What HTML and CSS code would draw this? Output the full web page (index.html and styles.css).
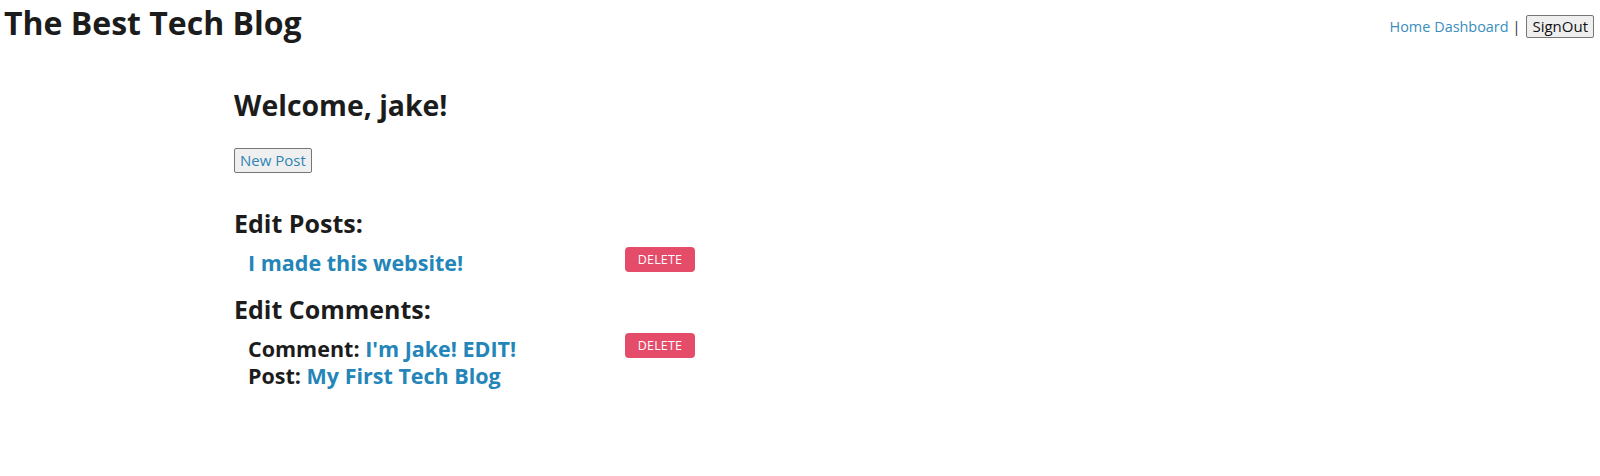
FILE: index.html
```html
<!DOCTYPE html>
<html lang="en">
<head>
<meta charset="utf-8">
<title>The Best Tech Blog</title>
<link rel="stylesheet" href="styles.css">
</head>
<body>
<header class="site-header">
  <h1 class="site-title">The Best Tech Blog</h1>
  <nav class="site-nav">
    <a href="#" class="nav-link">Home</a>
    <a href="#" class="nav-link">Dashboard</a>
    <span class="nav-sep">|</span>
    <button class="signout-btn">SignOut</button>
  </nav>
</header>
<main class="dashboard">
  <h2 class="welcome">Welcome, jake!</h2>
  <button class="new-post-btn">New Post</button>

  <h3 class="section-title">Edit Posts:</h3>
  <div class="item-row">
    <div class="item-text"><a href="#" class="item-link">I made this website!</a></div>
    <button class="delete-btn">DELETE</button>
  </div>

  <h3 class="section-title">Edit Comments:</h3>
  <div class="item-row">
    <div class="item-text">
      <div>Comment: <a href="#" class="item-link">I'm Jake! EDIT!</a></div>
      <div>Post: <a href="#" class="item-link">My First Tech Blog</a></div>
    </div>
    <button class="delete-btn">DELETE</button>
  </div>
</main>
</body>
</html>
```

FILE: styles.css
```css
html, body {
  margin: 0;
  padding: 0;
  background: #ffffff;
}

body {
  font-family: "Open Sans", "Noto Sans", sans-serif;
  color: #1a1a1a;
}

.site-header {
  display: flex;
  justify-content: space-between;
  align-items: flex-start;
  padding: 4px 6px 0 4px;
}

.site-title {
  margin: 0;
  font-size: 32px;
  line-height: 38px;
  font-weight: 700;
  color: #1c1c1c;
}

.site-nav {
  display: flex;
  align-items: center;
  gap: 4px;
  padding-top: 11px;
  font-size: 14.4px;
}

.nav-link {
  color: #3a8dbd;
  text-decoration: none;
}

.nav-sep {
  color: #333;
  margin: 0 2px 0 0;
}

.signout-btn {
  font-family: inherit;
  font-size: 15px;
  color: #111;
  background: #efefef;
  border: 1px solid #767676;
  border-radius: 2px;
  padding: 1px 5px;
  line-height: 19px;
}

.dashboard {
  padding: 45px 0 0 234px;
}

.welcome {
  margin: 0;
  font-size: 28.4px;
  line-height: 36px;
  font-weight: 700;
  color: #1c1c1c;
}

.new-post-btn {
  display: block;
  margin-top: 25px;
  font-family: inherit;
  font-size: 15px;
  color: #2f84b5;
  background: #efefef;
  border: 1px solid #767676;
  border-radius: 2px;
  padding: 2px 5px;
  line-height: 19px;
}

.section-title {
  margin: 35px 0 0 0;
  font-size: 25px;
  line-height: 31px;
  font-weight: 700;
  color: #1c1c1c;
}

.section-title + .item-row {
  margin-top: 10px;
}

.item-row + .section-title {
  margin-top: 17px;
}

.item-row {
  display: flex;
  align-items: flex-start;
  padding-left: 14px;
}

.item-text {
  width: 377px;
  font-size: 21.5px;
  line-height: 27.5px;
  font-weight: 700;
  color: #1c1c1c;
}

.item-link {
  color: #2385b8;
  text-decoration: none;
}

.delete-btn {
  width: 70px;
  height: 25px;
  margin-top: -2px;
  font-family: inherit;
  font-size: 12.5px;
  color: #ffffff;
  background: #e44c6a;
  border: none;
  border-radius: 4px;
  padding: 0;
  letter-spacing: 0.2px;
}
```
